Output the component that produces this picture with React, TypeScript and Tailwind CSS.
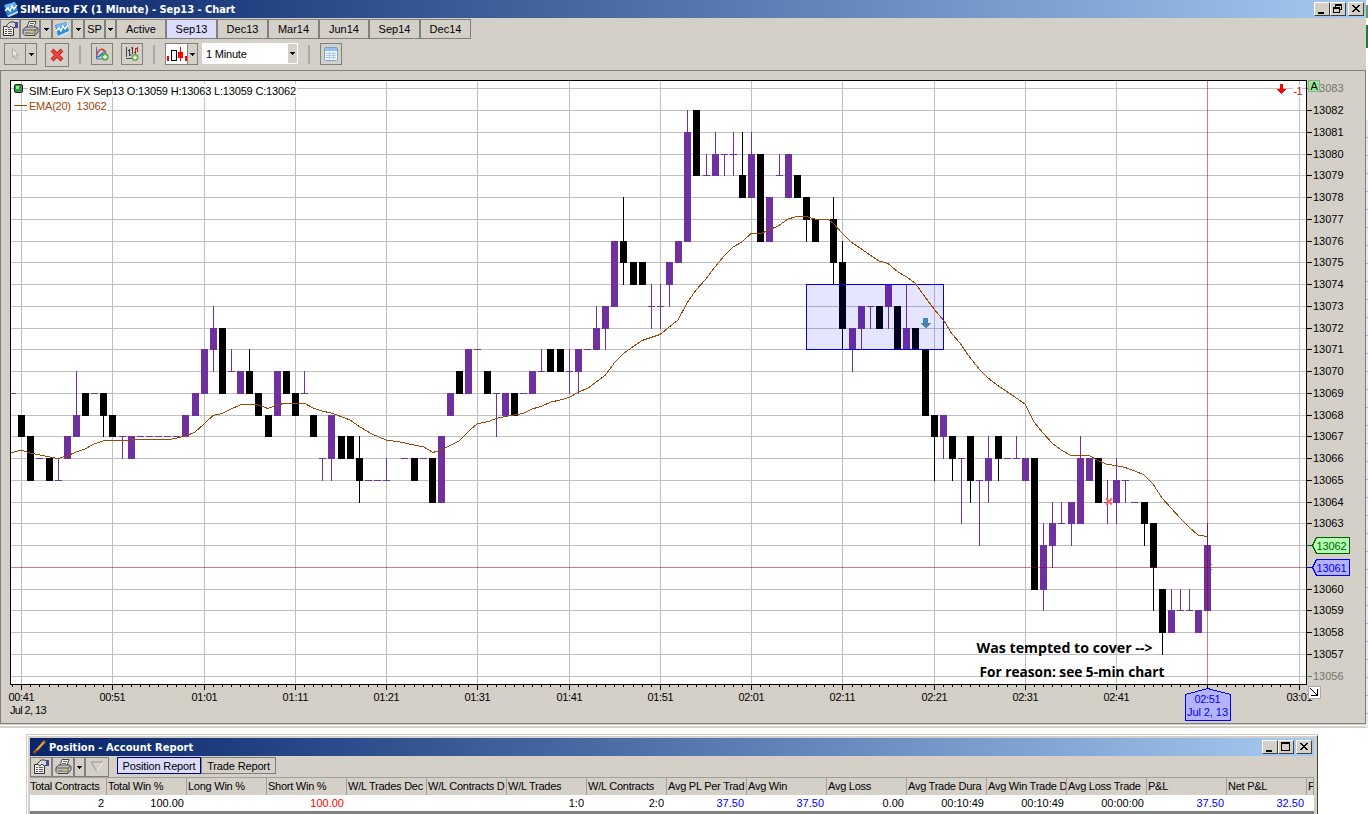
import React from "react";

const PRICE_Y = [88, 110, 132, 154, 175, 197, 219, 241, 262, 284, 306, 328, 349, 371, 393, 415, 436, 458, 480, 502, 523, 545, 567, 589, 610, 632, 654, 676];
const yOf = (p: number) => PRICE_Y[83 - p];
const xOf = (i: number) => Math.floor(21 + 9.125 * i + 0.65);

const UP = "#7030a0";
const DOWN = "#000000";

// [bar, colour, body top, body bottom, high, low]
type Bar = [number, "P" | "K", number, number, number?, number?];
const BARS: Bar[] = [
  [-1, "P", 69, 69], [0, "K", 68, 67], [1, "K", 67, 65], [2, "P", 66, 66], [3, "K", 66, 65], [4, "P", 65, 65, 66, 65],
  [5, "P", 67, 66], [6, "P", 68, 67, 70, 67], [7, "K", 69, 68], [8, "P", 69, 69], [9, "K", 69, 68, 69, 67], [10, "K", 68, 67],
  [11, "P", 67, 67, 67, 66], [12, "P", 67, 66], [13, "P", 67, 67], [14, "P", 67, 67], [15, "P", 67, 67], [16, "P", 67, 67], [17, "P", 67, 67],
  [18, "P", 68, 67], [19, "P", 69, 68], [20, "P", 71, 69], [21, "P", 72, 71, 73, 70], [22, "K", 72, 69], [23, "P", 70, 70, 71, 70],
  [24, "P", 70, 69], [25, "K", 70, 69, 71, 69], [26, "K", 69, 68], [27, "K", 68, 67], [28, "P", 70, 68], [29, "K", 70, 69], [30, "K", 69, 68],
  [31, "P", 69, 69, 70, 69], [32, "K", 68, 67], [33, "P", 66, 66, 66, 65], [34, "P", 68, 66, 68, 65], [35, "K", 67, 66], [36, "K", 67, 66],
  [37, "K", 66, 65, 67, 64], [38, "P", 65, 65], [39, "P", 65, 65], [40, "P", 65, 65, 66, 65], [42, "P", 66, 66], [43, "K", 66, 65],
  [44, "P", 66, 66], [45, "K", 66, 64], [46, "P", 67, 64], [47, "P", 69, 68], [48, "K", 70, 69], [49, "P", 71, 69], [50, "P", 71, 71],
  [51, "K", 70, 69], [52, "P", 69, 69, 69, 67], [53, "P", 69, 68], [54, "K", 69, 68], [55, "P", 69, 69], [56, "P", 70, 69],
  [57, "P", 70, 70, 71, 70], [58, "K", 71, 70], [59, "K", 71, 70], [60, "P", 70, 70, 71, 69], [61, "P", 71, 70, 71, 69], [62, "P", 71, 71],
  [63, "P", 72, 71, 73, 71], [64, "P", 73, 72, 73, 71], [65, "P", 76, 73], [66, "K", 76, 75, 78, 74], [67, "K", 75, 74], [68, "K", 75, 74],
  [69, "P", 73, 73, 74, 72], [70, "P", 73, 73, 74, 72], [71, "P", 75, 74, 75, 73], [72, "P", 76, 75], [73, "P", 81, 76, 82, 76],
  [74, "K", 82, 79], [75, "P", 79, 79, 80, 79], [76, "P", 80, 79, 81, 79], [77, "P", 80, 80, 80, 79], [78, "P", 80, 80, 81, 79],
  [79, "K", 79, 78, 81, 78], [80, "P", 80, 78, 81, 78], [81, "K", 80, 76], [82, "P", 78, 76], [83, "P", 79, 79, 80, 79], [84, "P", 80, 78],
  [85, "K", 79, 78], [86, "K", 78, 77, 78, 76], [87, "K", 77, 76], [88, "P", 77, 77], [89, "K", 77, 75, 78, 74], [90, "K", 75, 72, 76, 71],
  [91, "P", 72, 71, 72, 70], [92, "P", 73, 72, 73, 71], [93, "P", 73, 73, 73, 72], [94, "K", 73, 72], [95, "P", 74, 73, 74, 72],
  [96, "K", 73, 71], [97, "P", 72, 71, 74, 71], [98, "K", 72, 71], [99, "K", 71, 68], [100, "K", 68, 67, 68, 65], [101, "P", 68, 67, 68, 66],
  [102, "K", 67, 66, 67, 65], [103, "P", 66, 66, 66, 63], [104, "K", 67, 65, 67, 64], [105, "P", 65, 65, 65, 62], [106, "P", 66, 65, 67, 64],
  [107, "K", 67, 66, 67, 65], [108, "P", 66, 66], [109, "P", 66, 66, 67, 66], [110, "P", 66, 65], [111, "K", 66, 60], [112, "P", 62, 60, 63, 59],
  [113, "P", 63, 62, 64, 61], [114, "P", 63, 63, 64, 63], [115, "P", 64, 63, 64, 62], [116, "P", 66, 63, 67, 63], [117, "P", 66, 65],
  [118, "K", 66, 64], [119, "P", 64, 64, 65, 63], [120, "P", 65, 64, 66, 63], [121, "P", 65, 65, 65, 64], [122, "P", 64, 64],
  [123, "K", 64, 63, 64, 62], [124, "K", 63, 61, 63, 59], [125, "K", 60, 58, 60, 57], [126, "P", 59, 58, 60, 58], [127, "P", 59, 59, 60, 59],
  [128, "P", 59, 59, 60, 59], [129, "P", 59, 58], [130, "P", 62, 59, 63, 59],
];

const EMA =
  "11,453 21,450 30,453 40,455 50,457 58,458.5 67,456 76,452 85,449 94,444 103,441 110,440 131,440 138,439 172,439 186,436 195,432 204,424 213,415.5 222,413.5 231,409 240,405 249,404 258,405 268,408.5 277,405 286,403 304,403 313,408 322,411 331,413 341,416.5 350,420 360,427 372,434 386,440 400,442 414,445 424,447 433,452.5 441,450 459,441 470,430 477,424 490,421 496,418.5 505,416.5 523,413.5 532,409 541,406.5 551,402 560,400 569,397.5 578,392.5 588,388 597,381.5 605,375.5 615,362 624,353 642,340.5 660,334.5 678,320 687,303 696,290 705,280 715,267 724,256 733,247 742,242 751,233.5 760,234 769,230 778,226 788,219 795,217 806,216.5 815,219 828,219.5 833,223 842,233 851,242 860,248 870,255 879,261 888,263.5 898,272 906,276.5 915,283 925,297 934,309 944,321 952,334 960,343 968,355 980,370 988,378 1000,387 1009,393 1025,404 1034,422 1043,433 1052,443 1061,450 1071,455.5 1089,455.5 1098,460.5 1107,464.5 1116,465.5 1125,467.5 1135,471 1144,475 1153,484 1162,498 1171,508 1180,518 1189,527 1198,535 1207,536.5";

const TIMES = ["00:41", "00:51", "01:01", "01:11", "01:21", "01:31", "01:41", "01:51", "02:01", "02:11", "02:21", "02:31", "02:41", "", "03:01"];

function Chart() {
  return (
    <svg width="1364" height="652" viewBox="1 71 1364 652" className="block font-['Liberation_Sans',sans-serif] text-[11px]" shapeRendering="crispEdges">
      <rect x="10" y="80" width="1297" height="605" fill="#000" />
      <rect x="11" y="81" width="1295" height="603" fill="#fff" />
      {PRICE_Y.map((y) => y !== 567 && <rect key={y} x="11" y={y} width="1295" height="1" fill="#bfbfbf" />)}
      {TIMES.map((t, k) => t && <rect key={k} x={xOf(k * 10)} y="81" width="1" height="603" fill="#bfbfbf" />)}
      <rect x="28" y="84" width="269" height="13" fill="#fff" />
      <rect x="28" y="99" width="79" height="13" fill="#fff" />

      {BARS.map(([i, c, top, bottom, high, low]) => {
        const x = xOf(i);
        const fill = c === "P" ? UP : DOWN;
        const left = Math.max(11, x - 3);
        return (
          <g key={i} fill={fill}>
            <rect x={left} y={yOf(top)} width={x + 4 - left} height={yOf(bottom) - yOf(top) + 1} />
            {high !== undefined && low !== undefined && <rect x={x} y={yOf(high)} width="1" height={yOf(low) - yOf(high) + 1} />}
          </g>
        );
      })}

      <rect x="806.5" y="284.5" width="137" height="65" fill="rgba(0,0,255,0.1)" stroke="#0000ff" />
      <polyline points={EMA} fill="none" stroke="#964b0a" strokeWidth="1" />
      <rect x="1207" y="81" width="1" height="607" fill="rgba(150,0,10,0.5)" />
      <rect x="11" y="567" width="1295" height="1" fill="rgba(150,0,10,0.5)" />
      <path d="M923 318h5v5h3l-5 5h-1l-5-5h3z" fill="#4682b4" />
      <path d="M1106 498.500l6 6M1112 498.500l-6 6" stroke="#ff5f5f" strokeWidth="2" shapeRendering="auto" />
      <path d="M1211 564.500h1M1210 566.500h1M1211 569.500h1" stroke="#5a8ad0" />

      <rect x="14.500" y="84.500" width="8" height="8" rx="1.500" fill="#2f9440" stroke="#222" shapeRendering="auto" />
      <rect x="16" y="86" width="3" height="3" fill="#9be09b" />
      <text x="29" y="94.500" textLength="267" fill="#000">SIM:Euro FX Sep13 O:13059 H:13063 L:13059 C:13062</text>
      <rect x="14" y="105" width="13" height="1" fill="#964b0a" />
      <text x="29" y="109.500" textLength="42" fill="#964b0a">EMA(20)</text>
      <text x="76.500" y="109.500" textLength="30" fill="#964b0a">13062</text>
      <path d="M1280 84h3v5h3l-4 5h-1l-4-5h3z" fill="#ff0000" />
      <rect x="1293" y="85" width="9" height="12" fill="#fff" />
      <text x="1293.500" y="94.500" textLength="9" fill="#e00000">-1</text>

      {PRICE_Y.map((y, k) => {
        const p = 13083 - k;
        if (p === 13062 || p === 13061) return null;
        const edge = k === 0 || k === 27;
        return (
          <g key={p} fill={edge ? "#757370" : "#000"}>
            <rect x="1307" y={y} width="5" height="1" />
            <text x="1313" y={y + 4} textLength="30.500">{p}</text>
          </g>
        );
      })}
      <rect x="1308.500" y="80.500" width="11" height="11" fill="#90ee90" stroke="#a3a3a3" />
      <text x="1310.500" y="90" textLength="7">A</text>

      <rect x="1307" y="545" width="5" height="1" fill="#006400" />
      <path d="M1312.500 545.500l4-8h33v16h-33z" fill="#b3ffb3" stroke="#006400" />
      <text x="1316.500" y="549.500" textLength="30" fill="#006400">13062</text>
      <rect x="1307" y="567" width="5" height="1" fill="#0000ff" />
      <path d="M1312.500 567.500l4-8h33v16h-33z" fill="#b3b3ff" stroke="#0000ff" />
      <text x="1316.500" y="571.500" textLength="30" fill="#0000ff">13061</text>

      {Array.from({ length: 142 }, (_, k) => k - 1).map((i) => (
        <rect key={i} x={xOf(i)} y="685" width="1" height={i % 10 === 0 ? 5 : 2} fill="#000" />
      ))}
      {TIMES.map((t, k) => t && <text key={k} x={xOf(k * 10) - 12.5} y="701" textLength="26" fill="#000">{t}</text>)}
      <text x="10" y="714" textLength="36.500" fill="#000">Jul 2, 13</text>
      <rect x="1308" y="686" width="12" height="12" fill="#fff" stroke="#a8a8a8" />
      <path d="M1310.500 688.500l7 7M1317.500 689v7M1311 695.500h7" stroke="#000" fill="none" />
      <path d="M1185.500 694.500l22-6 23 6v26h-45z" fill="#b3b3ff" stroke="#0000ff" />
      <text x="1194.500" y="703" textLength="26" fill="#0000ff">02:51</text>
      <text x="1187" y="716" textLength="41" fill="#0000ff">Jul 2, 13</text>

      <g className="font-['Open_Sans',sans-serif] text-[14px] font-bold" fill="#000">
        <text x="976.500" y="653" textLength="176" lengthAdjust="spacingAndGlyphs">Was tempted to cover --&gt;</text>
        <text x="979.500" y="677" textLength="185" lengthAdjust="spacingAndGlyphs">For reason: see 5-min chart</text>
      </g>
    </svg>
  );
}

const Caret = () => (
  <svg width="5" height="3" viewBox="0 0 5 3" shapeRendering="crispEdges"><path d="M0 0h5v1H4v1H3v1H2V2H1V1H0z" /></svg>
);

const PropsIcon = () => (
  <svg width="17" height="16" viewBox="0 0 17 16">
    <path d="M1.500 5.500h10v9h-10z" fill="#f4f4f4" stroke="#333" />
    <path d="M3 8.500h2M3 10.500h2M3 12.500h2M6 8.500h4M6 10.500h4M6 12.500h4" stroke="#555" />
    <path d="M4 5l4-4h4l2 2v3l-3 1-2-2-2 2z" fill="#d8d8d8" stroke="#444" />
    <path d="M13 1h3v6h-3z" fill="#4a4a9c" />
  </svg>
);

const PrinterIcon = () => (
  <svg width="17" height="16" viewBox="0 0 17 16">
    <path d="M5 6.500L7 .5h7l-2 6z" fill="#fff" stroke="#444" />
    <path d="M8 2.500h4M7 4.500h4" stroke="#666" />
    <path d="M1 8.500l3-2.500h10l2 1.500V11l-3 3.500H3L1 12.500z" fill="#c4c4c4" stroke="#444" />
    <path d="M1.500 9h11.500l3-2M3 12h9M13 9v5" stroke="#555" fill="none" />
    <path d="M8 11h4" stroke="#e0c820" strokeWidth="1.500" />
  </svg>
);

const ChartIcon = () => (
  <svg width="16" height="16" viewBox="0 0 16 16">
    <path d="M1 4l11-3 3 9-11 5z" fill="#2e8ad8" />
    <path d="M2 4l10-3 1 3-10 4z" fill="#6db7ee" />
    <path d="M2 10l3-3 2 3 2-5 2 3 3-4" fill="none" stroke="#fff" strokeWidth="1.500" />
    <path d="M4 15l11-5v2l-9 4z" fill="#cfe6f8" />
  </svg>
);

function WinButton({ kind }: { kind: "min" | "max" | "restore" | "close" }) {
  return (
    <div className="h-[14px] w-4 border border-t-white border-r-[#404040] border-b-[#404040] border-l-white bg-[#d4d0c8]">
      <svg width="14" height="12" viewBox="0 0 14 12" shapeRendering="crispEdges">
        {kind === "min" && <path d="M3 9h6v2H3z" />}
        {kind === "max" && <path d="M2 1h9v9H2zM3 3v6h7V3z" fillRule="evenodd" />}
        {kind === "restore" && <path d="M4 1h7v6H9V6h1V3H5v1H4zM2 4h7v6H2zM3 6v3h5V6z" fillRule="evenodd" />}
        {kind === "close" && <path d="M3 2h2v1h1v1h2V3h1V2h2v1h-1v1H9v1H8v1h1v1h1v1h1v1H9V8H8V7H6v1H5v1H3V8h1V7h1V6h1V5H5V4H4V3H3z" />}
      </svg>
    </div>
  );
}

const cell = "flex h-5 items-center justify-center border border-[#808080]";
const tool = "flex items-center justify-center border border-[#808080]";

const TABS: [string, string][] = [
  ["Active", "w-[50px]"], ["Sep13", "w-[51px] bg-[#dcdcfc]"], ["Dec13", "w-[51px]"], ["Mar14", "w-[51px]"],
  ["Jun14", "w-[50px]"], ["Sep14", "w-[51px]"], ["Dec14", "w-[51px]"],
];

const COLUMNS: [string, string, string][] = [
  ["Total Contracts", "2", "text-black"], ["Total Win %", "100.00", "text-black"], ["Long Win %", "", "text-black"],
  ["Short Win %", "100.00", "text-[#ff0000]"], ["W/L Trades Dec", "", "text-black"], ["W/L Contracts D", "", "text-black"],
  ["W/L Trades", "1:0", "text-black"], ["W/L Contracts", "2:0", "text-black"], ["Avg PL Per Trad", "37.50", "text-[#0000ff]"],
  ["Avg Win", "37.50", "text-[#0000ff]"], ["Avg Loss", "0.00", "text-black"], ["Avg Trade Dura", "00:10:49", "text-black"],
  ["Avg Win Trade D", "00:10:49", "text-black"], ["Avg Loss Trade", "00:00:00", "text-black"],
  ["P&L", "37.50", "text-[#0000ff]"], ["Net P&L", "32.50", "text-[#0000ff]"], ["F", "", "text-black"],
];

const titleFont = "font-['DejaVu_Sans_Condensed','DejaVu_Sans',sans-serif] text-[11px] font-bold text-white whitespace-nowrap";

function ChartWindow() {
  return (
    <div className="flex h-[728px] w-[1366px] flex-col bg-[#d4d0c8]">
      <div className="flex h-[18px] items-center bg-linear-to-r from-[#0a246a] to-[#a6caf0] pl-[3px] pr-[2px]">
        <ChartIcon />
        <span className={`${titleFont} flex-1 pl-px tracking-[-0.04px]`}>SIM:Euro FX (1 Minute) - Sep13 - Chart</span>
        <WinButton kind="min" /><WinButton kind="restore" /><div className="w-[2px]" /><WinButton kind="close" />
      </div>
      <div className="mt-px flex h-5">
        <div className={`${cell} w-5`}><PropsIcon /></div>
        <div className={`${cell} w-5`}><PrinterIcon /></div>
        <div className={`${cell} w-3`}><Caret /></div>
        <div className={`${cell} w-5`}><ChartIcon /></div>
        <div className={`${cell} w-3`}><Caret /></div>
        <div className={`${cell} w-[21px]`}>SP</div>
        <div className={`${cell} w-[11px]`}><Caret /></div>
        {TABS.map(([t, c]) => <div key={t} className={`${cell} ${c}`}>{t}</div>)}
      </div>
      <div className="flex h-[31px] items-start pt-1 pl-1">
        <div className={`${tool} h-[22px] w-[22px]`}>
          <svg width="14" height="14" viewBox="0 0 14 14"><path d="M4.500 1.500v9l2-2 1.500 4 2-1-2-3.500h3z" fill="#e8e6e2" stroke="#aaa" /></svg>
        </div>
        <div className={`${tool} -ml-px h-[22px] w-3`}><Caret /></div>
        <div className={`${tool} ml-2 h-6 w-6`}>
          <svg width="14" height="14" viewBox="0 0 14 14"><path d="M2 2l10 10M12 2L2 12" stroke="#c02020" strokeWidth="4" /><path d="M2.500 2.500l9 9M11.500 2.500l-9 9" stroke="#f04848" strokeWidth="2.200" /></svg>
        </div>
        <div className="mt-[2px] ml-[10px] h-[19px] w-[2px] bg-[#aaa]" />
        <div className={`${tool} ml-[10px] h-[22px] w-[22px]`}>
          <svg width="16" height="16" viewBox="0 0 16 16">
            <path d="M2.500 1v12H13M2 13l9-9" fill="none" stroke="#4a78b8" />
            <path d="M3 9c1-6 6-8 9-2" fill="none" stroke="#d04040" strokeWidth="1.500" />
            <path d="M3 10c3 3 5-4 9-3" fill="none" stroke="#3478d8" strokeWidth="1.500" />
            <circle cx="11" cy="11" r="3.700" fill="#5cb04c" /><path d="M11 9v4M9 11h4" stroke="#fff" strokeWidth="1.300" />
          </svg>
        </div>
        <div className={`${tool} ml-2 h-[22px] w-[22px]`}>
          <svg width="16" height="16" viewBox="0 0 16 16">
            <path d="M2.500 1v10M2 12.500h6" stroke="#445" />
            <path d="M5.500 3v7M4 4.500h1.500M5.500 9h2M8.500 1v7M7 2h1.500" stroke="#333" />
            <path d="M11.500 2v6M10 6.500h1.500M13.500 1v5M12 2.500h1.500" stroke="#c02020" />
            <circle cx="11" cy="11.500" r="3.500" fill="#5cb04c" /><path d="M11 9.500v4M9 11.500h4" stroke="#fff" strokeWidth="1.300" />
          </svg>
        </div>
        <div className="mt-[2px] ml-[10px] h-[19px] w-[2px] bg-[#aaa]" />
        <div className={`${tool} ml-[10px] h-[22px] w-[23px] bg-white`}>
          <svg width="21" height="20" viewBox="0 0 21 20" shapeRendering="crispEdges">
            <path d="M1 12h2v5H1zM19 12h2v5h-2zM12 8h5v6h-5zM14 3h1v14h-1z" fill="#ff0000" />
            <path d="M5.500 6.500h5v10h-5z" fill="#fff" stroke="#000" />
          </svg>
        </div>
        <div className={`${tool} -ml-px h-[22px] w-[11px]`}><Caret /></div>
        <div className="ml-1 flex h-[21px] w-24 items-center bg-white pl-1">
          <span className="flex-1 pt-px tracking-[-0.2px]">1 Minute</span>
          <div className="mr-px flex h-[19px] w-[9px] items-center justify-center bg-[#d4d0c8]"><Caret /></div>
        </div>
        <div className="mt-[2px] ml-[10px] h-[19px] w-[2px] bg-[#aaa]" />
        <div className={`${tool} ml-[10px] h-[22px] w-[22px]`}>
          <svg width="16" height="16" viewBox="0 0 16 16">
            <rect x="1.500" y="1.500" width="13" height="13" rx="1" fill="#eef6fe" stroke="#6fa3d8" />
            <rect x="2" y="2" width="12" height="3" fill="#8fc0ee" />
            <path d="M3 7.500h10M3 9.500h10M3 11.500h10M6.500 6v7M10.500 6v7" stroke="#b0c8e0" />
          </svg>
        </div>
      </div>
      <div className="h-[654px] border border-[#808080]"><Chart /></div>
      <div className="h-px w-full" />
      <div className="h-px w-full bg-white" />
    </div>
  );
}

function ReportWindow() {
  return (
    <div className="ml-[26px] h-20 w-[1292px] border-t border-l border-[#d4d0c8]">
      <div className="h-full border-t border-r border-l border-t-white border-r-[#404040] border-l-white bg-[#d4d0c8] pt-[2px] pr-[3px] pl-[2px]">
        <div className="flex h-[18px] items-center bg-linear-to-r from-[#0a246a] to-[#a6caf0] pr-[2px] pl-[2px]">
          <svg width="16" height="16" viewBox="0 0 16 16"><path d="M2 14L13 2" stroke="#f0a030" strokeWidth="2.500" /><path d="M2 14.500L5 11M12 3l1.500-1.500" stroke="#7a3a10" strokeWidth="1.500" /></svg>
          <span className={`${titleFont} flex-1 pl-px tracking-[0.07px]`}>Position - Account Report</span>
          <WinButton kind="min" /><WinButton kind="max" /><div className="w-[2px]" /><WinButton kind="close" />
        </div>
        <div className="flex h-[21px] items-start pt-px">
          <div className={`${cell} w-[22px]`}><PropsIcon /></div>
          <div className={`${cell} w-[22px]`}><PrinterIcon /></div>
          <div className={`${cell} w-[11px]`}><Caret /></div>
          <div className={`${cell} w-6`}>
            <svg width="16" height="14" viewBox="0 0 16 14"><path d="M2 2h12L8 12z" fill="#d4d0c8" stroke="#999" /><path d="M8 12l6-10" stroke="#fff" /></svg>
          </div>
          <div className="ml-2 flex h-[17px] w-[84px] items-center justify-center border border-[#00007f] bg-[#dcdcfc] pt-px tracking-[-0.15px]">Position Report</div>
          <div className="flex h-[17px] w-[75px] items-center justify-center border border-[#808080] pt-px tracking-[-0.15px]">Trade Report</div>
        </div>
        <div className="flex overflow-hidden">
          {COLUMNS.map(([h, v, c], i) => (
            <div key={h} className={`shrink-0 ${i === 0 ? "w-[77px]" : i === 16 ? "w-[7px]" : "w-20"}`}>
              <div className={`flex h-[18px] items-center overflow-hidden border-t border-r border-[#a0a0a0] tracking-[-0.25px] whitespace-nowrap ${i === 0 ? "" : "pl-px"}`}>{h}</div>
              <div className={`flex h-4 items-center justify-end bg-white pr-[3px] ${c}`}>{v}</div>
            </div>
          ))}
        </div>
        <div className="h-[3px] bg-[#808080]" />
      </div>
    </div>
  );
}

export default function App() {
  return (
    <div className="flex h-[814px] w-[1368px] flex-col overflow-hidden bg-white font-['Liberation_Sans',sans-serif] text-[11px] leading-none text-black">
      <div className="flex h-[728px]">
        <ChartWindow />
        <div className="flex w-[2px] flex-col bg-[#eef1f5]">
          <div className="h-[5px] bg-white" />
          <div className="h-[13px] bg-[#5fa046]" />
          <div className="h-[7px] bg-white" />
          <div className="h-[23px] bg-[#1f7a3c]" />
          <div className="h-[72px] bg-white" />
          <div className="flex-1 bg-[repeating-linear-gradient(to_bottom,#e4e8f0_0px,#e4e8f0_17px,#a8b4c4_17px,#a8b4c4_18px)]" />
        </div>
      </div>
      <div className="h-[6px]" />
      <ReportWindow />
    </div>
  );
}
